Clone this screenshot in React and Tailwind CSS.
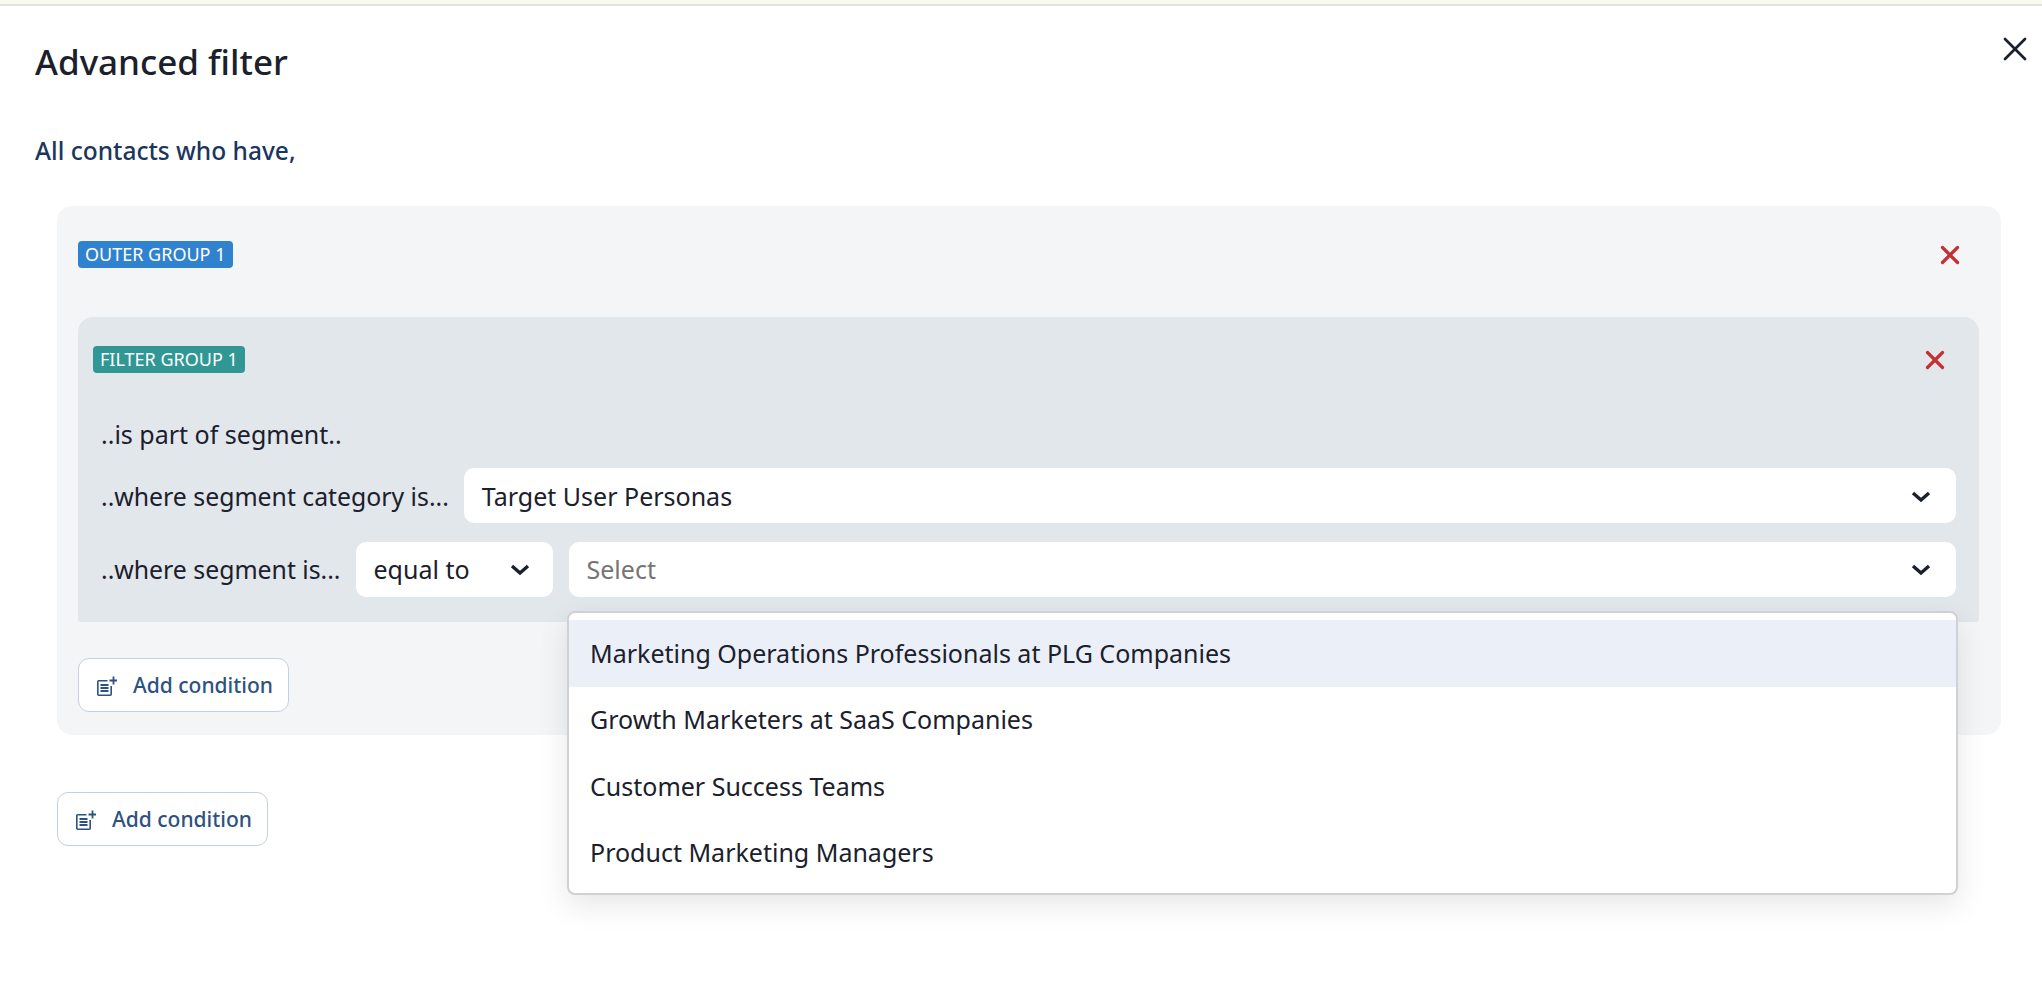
import React from "react";
import { X } from "lucide-react";

const options = [
  "Marketing Operations Professionals at PLG Companies",
  "Growth Marketers at SaaS Companies",
  "Customer Success Teams",
  "Product Marketing Managers",
];

const Chevron = () => (
  <svg width="20" height="13" viewBox="0 0 20 13" fill="none" className="shrink-0">
    <path d="M2 3 L10 10 L18 3" stroke="#1a202c" strokeWidth="3.4" />
  </svg>
);

const NoteIcon = () => (
  <svg width="20" height="20" viewBox="0 0 20 20" fill="none" className="shrink-0">
    <path d="M10.5 4.8H1.8a1 1 0 0 0-1 1v12.4a1 1 0 0 0 1 1h11.4a1 1 0 0 0 1-1V10" stroke="#2c5282" strokeWidth="1.6" />
    <path d="M3.5 9h8M3.5 12h8M3.5 15h8" stroke="#2c5282" strokeWidth="1.8" />
    <path d="M16.5 0.5v8M12.5 4.5h7.5" stroke="#2c5282" strokeWidth="1.8" />
  </svg>
);

const Badge = ({ color, children }) => (
  <span className={`flex h-[27px] items-center rounded-[4px] px-[7px] text-[18px] text-white ${color}`}>
    {children}
  </span>
);

const AddCondition = () => (
  <button className="flex h-[54px] w-[211px] items-center gap-[16px] rounded-[11px] border border-[#c5d0de] bg-white pl-[18px] pt-[1px] text-[21px] font-medium text-[#2c5282]">
    <NoteIcon />
    Add condition
  </button>
);

const App = () => {
  return (
    <div className="min-h-screen bg-white font-['Noto_Sans',sans-serif] text-[#1a202c]">
      <div className="h-[6px] border-b-2 border-[#e0e3d8] bg-[#f9f9f0]" />

      <div className="relative px-[35px]">
        <button className="absolute right-[7px] top-[23px]">
          <X size={40} strokeWidth={1.6} />
        </button>

        <h1 className="pt-[32px] text-[35px] leading-[48px] font-medium">Advanced filter</h1>
        <p className="mt-[49px] text-[24.5px] leading-[32px] font-medium text-[#1a365d]">All contacts who have,</p>

        {/* Outer group */}
        <div className="relative mt-[39px] ml-[22px] mr-[6px] h-[529px] rounded-[15px] bg-[#f4f5f7] pl-[21px] pr-[22px] pt-[35px]">
          <div className="flex h-[27px] items-center justify-between pr-[14px]">
            <Badge color="bg-[#3182ce]">OUTER GROUP 1</Badge>
            <X size={30} strokeWidth={2.6} className="text-[#c53030]" />
          </div>

          {/* Filter group */}
          <div className="mt-[49px] h-[305px] rounded-t-[15px] rounded-b-[3px] bg-[#e2e7eb] pl-[15px] pr-[23px] pt-[29px]">
            <div className="flex h-[27px] items-center justify-between pr-[6px]">
              <Badge color="bg-[#319795]">FILTER GROUP 1</Badge>
              <X size={30} strokeWidth={2.6} className="text-[#c53030]" />
            </div>

            <div className="mt-[45px] pl-[8px] text-[25px] leading-[32px]">..is part of segment..</div>

            <div className="mt-[18px] flex items-center gap-[15px] pl-[8px]">
              <span className="pt-[2px] text-[24.8px]">..where segment category is...</span>
              <div className="flex h-[55px] flex-1 items-center justify-between rounded-[10px] bg-white pl-[18px] pr-[25px] pt-[2px] text-[25px]">
                Target User Personas
                <Chevron />
              </div>
            </div>

            <div className="mt-[19px] flex items-center gap-[15px] pl-[8px]">
              <span className="text-[24.8px]">..where segment is...</span>
              <div className="flex h-[55px] w-[197px] shrink-0 items-center justify-between rounded-[10px] bg-white pl-[18px] pr-[23px] text-[25px]">
                equal to
                <Chevron />
              </div>
              <div className="ml-[1px] flex h-[55px] flex-1 items-center justify-between rounded-[10px] bg-white pl-[18px] pr-[25px] text-[25px] text-[#757575]">
                Select
                <Chevron />
              </div>
            </div>
          </div>

          <div className="mt-[36px]">
            <AddCondition />
          </div>

          {/* Open dropdown */}
          <div className="absolute left-[510px] top-[405px] z-10 w-[1391px] rounded-[8px] border-2 border-[#cfd1d4] bg-white py-[7px] text-[25px] shadow-[0_10px_30px_rgba(0,0,0,0.1)]">
            {options.map((o, i) => (
              <div key={o} className={`flex h-[66.5px] items-center pl-[21px] ${i === 0 ? "bg-[#ebf0f8]" : ""}`}>
                {o}
              </div>
            ))}
          </div>
        </div>

        <div className="mt-[57px] ml-[22px]">
          <AddCondition />
        </div>
      </div>
    </div>
  );
};

export default App;
